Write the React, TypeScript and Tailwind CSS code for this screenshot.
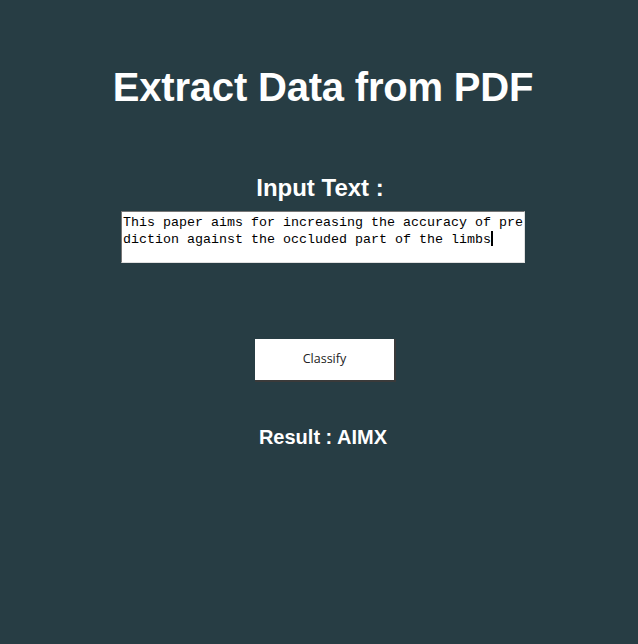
export default function App() {
  return (
    <div className="min-h-[644px] w-full bg-[#273d44] flex flex-col items-center font-['Liberation_Sans',Arial,sans-serif] text-white">
      <h1 className="mt-[64px] ml-[8px] text-[40px] leading-[46px] font-bold tracking-[-0.2px]">Extract Data from PDF</h1>

      <h2 className="mt-[64px] ml-[2px] text-[24px] leading-[28px] font-bold">Input Text :</h2>
      <div className="mt-[9px] ml-[8px] h-[52px] w-[404px] bg-white border border-t-[#767676] border-l-[#767676] border-r-[#e0e0e0] border-b-[#e0e0e0] px-[1px] pt-[3px] font-['Liberation_Mono','Courier_New',monospace] text-[13.33px] leading-[16px] text-black break-all">
        This paper aims for increasing the accuracy of prediction against the occluded part of the limbs
        <span className="inline-block w-[2px] h-[15px] bg-black align-[-3px]" />
      </div>

      <button className="mt-[76px] ml-[13px] h-[43px] w-[141px] bg-white border-r-2 border-b-2 border-r-[#3a3a3a] border-b-[#3a3a3a] font-['Open_Sans','Noto_Sans',sans-serif] text-[12.5px] text-[#222]">
        Classify
      </button>

      <p className="mt-[43px] ml-[8px] text-[20px] leading-[24px] font-bold">Result : AIMX</p>
    </div>
  );
}
